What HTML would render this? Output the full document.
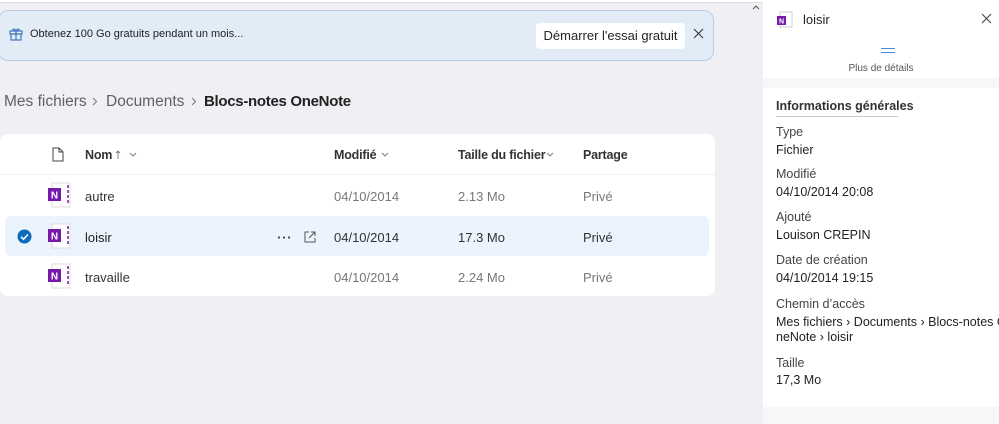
<!DOCTYPE html>
<html><head><meta charset="utf-8"><style>
*{margin:0;padding:0;box-sizing:border-box}
body{width:999px;height:424px;overflow:hidden;background:#f0f0f4;font-family:"Liberation Sans",sans-serif;color:#242424;position:relative}
.abs{position:absolute}
.topbar{left:0;top:0;width:999px;height:3px;background:#fff;border-bottom:1px solid #ddd}
.banner{left:-2px;top:10px;width:716px;height:51px;background:#e2ecf7;border:1px solid #b9cde2;border-radius:10px}
.banner .t{left:31px;top:17px;font-size:11px;color:#222}
.btn{left:537px;top:12px;width:149px;height:26px;background:#fff;border-radius:4px;font-size:13px;text-align:center;line-height:26px}
.crumb{top:93px;font-size:15.5px;color:#616161}
.table{left:0;top:134px;width:715px;height:162px;background:#fff;border-radius:8px}
.hdr{top:14px;font-size:12.5px;font-weight:bold;color:#333;letter-spacing:-0.2px}
.row{left:0;width:715px;height:41px}
.cell{font-size:13px;color:#777;top:13px}
.name{font-size:13px;color:#333;top:13px}
.sel{left:5px;top:216px;width:704px;height:40px;background:#ebf3fc;border-radius:6px}
.panel{left:763px;top:0;width:236px;height:424px;background:#fff}
.lab{left:13px;font-size:12.5px;color:#444}
.val{left:13px;font-size:12.5px;color:#222}
</style></head><body>
<div class="abs topbar"></div>
<div class="abs banner">
 <svg class="abs" style="left:10px;top:16px" width="14" height="14" viewBox="0 0 14 14" fill="none" stroke="#2f6db5" stroke-width="1.1"><rect x="1" y="4" width="12" height="3"/><rect x="2" y="7" width="10" height="6"/><path d="M7 4v9M7 4C5 1 3 2 4.5 4M7 4c2-3 4-2 2.5 0"/></svg>
 <div class="abs t">Obtenez 100 Go gratuits pendant un mois...</div>
 <div class="abs btn">Démarrer l'essai gratuit</div>
 <svg class="abs" style="left:694px;top:17px" width="11" height="11" viewBox="0 0 11 11" stroke="#333" stroke-width="1.1"><path d="M1 1l9 9M10 1l-9 9"/></svg>
</div>
<div class="abs crumb" style="left:4px">Mes fichiers</div>
<svg class="abs" style="left:92px;top:97px" width="6" height="9" viewBox="0 0 6 9" fill="none" stroke="#777" stroke-width="1"><path d="M1 1l3.5 3.5L1 8"/></svg>
<div class="abs crumb" style="left:106px">Documents</div>
<svg class="abs" style="left:191px;top:97px" width="6" height="9" viewBox="0 0 6 9" fill="none" stroke="#777" stroke-width="1"><path d="M1 1l3.5 3.5L1 8"/></svg>
<div class="abs crumb" style="left:204px;color:#222;font-weight:bold;font-size:15px;letter-spacing:-0.3px">Blocs-notes OneNote</div>

<div class="abs table">
 <svg class="abs" style="left:52px;top:13px" width="12" height="15" viewBox="0 0 12 15" fill="none" stroke="#444" stroke-width="1"><path d="M1 1h6l4 4v9H1zM7 1v4h4"/></svg>
 <div class="abs hdr" style="left:85px">Nom</div>
 <svg class="abs" style="left:114px;top:16px" width="24" height="10" viewBox="0 0 24 10" fill="none" stroke="#777" stroke-width="0.9"><path d="M4 9V1M2 3l2-2 2 2M16 3l3 3 3-3"/></svg>
 <div class="abs hdr" style="left:334px">Modifié</div>
 <svg class="abs" style="left:381px;top:18px" width="8" height="6" viewBox="0 0 8 6" fill="none" stroke="#777" stroke-width="0.9"><path d="M1 1l3 3 3-3"/></svg>
 <div class="abs hdr" style="left:458px">Taille du fichier</div>
 <svg class="abs" style="left:546px;top:18px" width="8" height="6" viewBox="0 0 8 6" fill="none" stroke="#777" stroke-width="0.9"><path d="M1 1l3 3 3-3"/></svg>
 <div class="abs hdr" style="left:583px">Partage</div>
 <div class="abs" style="left:0;top:40px;width:715px;height:1px;background:#f0f0f0"></div>
</div>
<div class="abs sel"></div>
<svg class="abs" style="left:17px;top:229px" width="15" height="15" viewBox="0 0 15 15"><circle cx="7.5" cy="7.5" r="7" fill="#0f6cbd"/><path d="M4 7.8l2.5 2.4L11 5.5" fill="none" stroke="#fff" stroke-width="1.6"/></svg>

<div class="abs row" style="top:176px">
 <svg class="abs" style="left:48px;top:6px" width="24" height="26" viewBox="0 0 24 26"><rect x="4" y="1" width="18" height="24" fill="#fff" stroke="#ddd"/><path d="M20 3v20" stroke="#7719aa" stroke-width="1.5" stroke-dasharray="3 2"/><rect x="0" y="6" width="13" height="13" fill="#7719aa"/><text x="6.5" y="16.5" font-size="10" font-weight="bold" fill="#fff" text-anchor="middle" font-family="Liberation Sans">N</text></svg>
 <div class="abs name" style="left:85px">autre</div>
 <div class="abs cell" style="left:334px">04/10/2014</div>
 <div class="abs cell" style="left:458px">2.13 Mo</div>
 <div class="abs cell" style="left:583px">Privé</div>
</div>
<div class="abs row" style="top:217px">
 <svg class="abs" style="left:48px;top:6px" width="24" height="26" viewBox="0 0 24 26"><rect x="4" y="1" width="18" height="24" fill="#fff" stroke="#ddd"/><path d="M20 3v20" stroke="#7719aa" stroke-width="1.5" stroke-dasharray="3 2"/><rect x="0" y="6" width="13" height="13" fill="#7719aa"/><text x="6.5" y="16.5" font-size="10" font-weight="bold" fill="#fff" text-anchor="middle" font-family="Liberation Sans">N</text></svg>
 <div class="abs name" style="left:85px;color:#222">loisir</div>
 <svg class="abs" style="left:277px;top:19px" width="14" height="3" viewBox="0 0 14 3" fill="#444"><circle cx="2" cy="1.5" r="1.1"/><circle cx="7" cy="1.5" r="1.1"/><circle cx="12" cy="1.5" r="1.1"/></svg>
 <svg class="abs" style="left:303px;top:13px" width="14" height="14" viewBox="0 0 14 14" fill="none" stroke="#555" stroke-width="1"><path d="M6 2H2v10h10V8M8 2h4v4M12 2L6 8"/></svg>
 <div class="abs cell" style="left:334px;color:#333">04/10/2014</div>
 <div class="abs cell" style="left:458px;color:#333">17.3 Mo</div>
 <div class="abs cell" style="left:583px;color:#333">Privé</div>
</div>
<div class="abs row" style="top:257px">
 <svg class="abs" style="left:48px;top:6px" width="24" height="26" viewBox="0 0 24 26"><rect x="4" y="1" width="18" height="24" fill="#fff" stroke="#ddd"/><path d="M20 3v20" stroke="#7719aa" stroke-width="1.5" stroke-dasharray="3 2"/><rect x="0" y="6" width="13" height="13" fill="#7719aa"/><text x="6.5" y="16.5" font-size="10" font-weight="bold" fill="#fff" text-anchor="middle" font-family="Liberation Sans">N</text></svg>
 <div class="abs name" style="left:85px">travaille</div>
 <div class="abs cell" style="left:334px">04/10/2014</div>
 <div class="abs cell" style="left:458px">2.24 Mo</div>
 <div class="abs cell" style="left:583px">Privé</div>
</div>
<svg class="abs" style="left:752px;top:5px" width="8" height="5" viewBox="0 0 8 5" fill="none" stroke="#555" stroke-width="1"><path d="M1 4l3-3 3 3"/></svg>

<div class="abs panel">
 <svg class="abs" style="left:14px;top:11px" width="16" height="17" viewBox="0 0 16 17"><rect x="3" y="1" width="12" height="15" fill="#fff" stroke="#ccc"/><rect x="0" y="5" width="9" height="9" fill="#7719aa"/><text x="4.5" y="12.5" font-size="7" font-weight="bold" fill="#fff" text-anchor="middle" font-family="Liberation Sans">N</text></svg>
 <div class="abs" style="left:40px;top:12px;font-size:13px">loisir</div>
 <svg class="abs" style="left:218px;top:13px" width="11" height="11" viewBox="0 0 11 11" stroke="#444" stroke-width="1.1"><path d="M1 1l9 9M10 1l-9 9"/></svg>
 <div class="abs" style="left:118px;top:48px;width:14px;height:1px;background:#4a8ad0"></div>
 <div class="abs" style="left:118px;top:52px;width:14px;height:1px;background:#4a8ad0"></div>
 <div class="abs" style="left:0;top:63px;width:236px;text-align:center;font-size:10px;color:#555">Plus de détails</div>
 <div class="abs" style="left:0;top:78px;width:236px;height:10px;background:#f7f7f7"></div>
 <div class="abs" style="left:13px;top:99px;font-size:12.5px;font-weight:bold;color:#333">Informations générales</div>
 <div class="abs" style="left:13px;top:116px;width:122px;height:1px;background:#ccc"></div>
 <div class="abs lab" style="top:125px">Type</div><div class="abs val" style="top:143px">Fichier</div>
 <div class="abs lab" style="top:167px">Modifié</div><div class="abs val" style="top:185px">04/10/2014 20:08</div>
 <div class="abs lab" style="top:210px">Ajouté</div><div class="abs val" style="top:228px">Louison CREPIN</div>
 <div class="abs lab" style="top:253px">Date de création</div><div class="abs val" style="top:271px">04/10/2014 19:15</div>
 <div class="abs lab" style="top:297px">Chemin d’accès</div>
 <div class="abs val" style="top:315px;white-space:nowrap">Mes fichiers › Documents › Blocs-notes O</div>
 <div class="abs val" style="top:330px">neNote › loisir</div>
 <div class="abs lab" style="top:356px">Taille</div><div class="abs val" style="top:373px">17,3 Mo</div>
 <div class="abs" style="left:0;top:407px;width:236px;height:17px;background:#f7f7f7"></div>
</div>
</body></html>
